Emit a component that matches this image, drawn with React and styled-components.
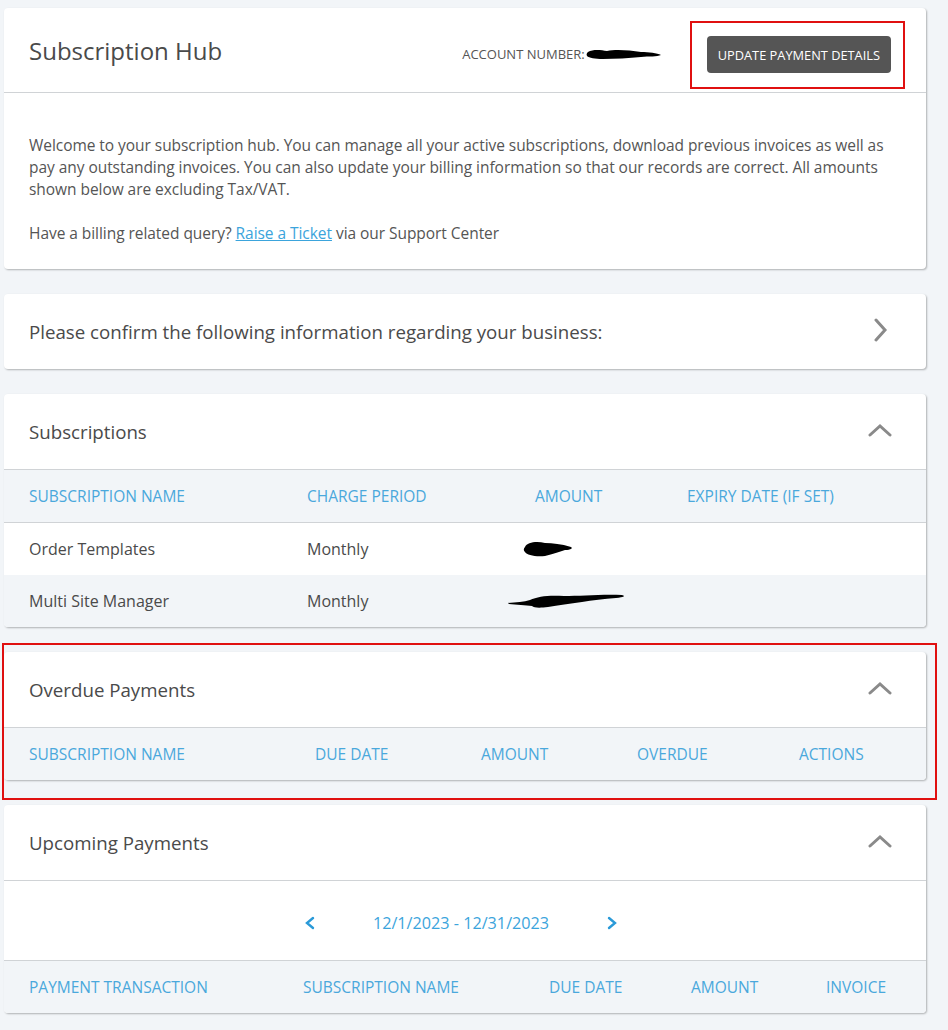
import React from "react";
import styled, { createGlobalStyle } from "styled-components";

const GlobalStyle = createGlobalStyle`
  html, body {
    margin: 0;
    background: #f2f5f8;
  }
  body {
    font-family: "Open Sans", "Liberation Sans", sans-serif;
    color: #4a4a4a;
  }
`;

const Page = styled.div`
  display: flex;
  flex-direction: column;
  gap: 25px;
  padding: 8px 22px 14px 4px;
`;

const Card = styled.section`
  background: #fff;
  border-radius: 4px;
  box-shadow: 1px 1px 2px rgba(0, 0, 0, 0.28);
  overflow: hidden;
`;

const HubHeader = styled.div`
  display: flex;
  align-items: center;
  height: 84px;
  padding: 0 21px 0 25px;
  border-bottom: 1px solid #d0d3d6;
`;

const Title = styled.h2`
  margin: 0;
  font-size: ${(p) => (p.$big ? "24px" : "18.7px")};
  font-weight: 400;
  color: #4a4a4a;
  flex: 1;
`;

const AccountLabel = styled.span`
  display: flex;
  align-items: center;
  margin-top: 8px;
  font-size: 13px;
  color: #555;
`;

const Highlight = styled.div`
  border: 2px solid #e01010;
  padding: ${(p) => p.$pad};
  margin: ${(p) => p.$margin};
`;

const DarkButton = styled.button`
  height: 37px;
  padding: 0 11px;
  border: 0;
  border-radius: 4px;
  background: #555;
  color: #fff;
  font-family: inherit;
  font-size: 12.8px;
  cursor: pointer;
`;

const HubBody = styled.div`
  padding: 41px 25px 25px;
  font-size: 15.5px;
  line-height: 22px;
  color: #555;
  letter-spacing: -0.05px;

  p {
    margin: 0 0 22px;
  }
  p:last-child {
    margin: 0;
  }
`;

const Link = styled.a`
  color: #3ba4dc;
  text-decoration: underline;
`;

const PanelHeader = styled.div`
  display: flex;
  align-items: center;
  height: 75px;
  padding: 0 34px 0 25px;
  border-bottom: ${(p) => (p.$open ? "1px solid #d0d3d6" : "0")};
`;

const Chevron = styled.svg`
  width: 24px;
  height: 24px;
  color: #8a8a8a;
  margin-top: ${(p) => p.$shift || 0}px;
`;

const TableGrid = styled.div`
  display: grid;
  grid-template-columns: ${(p) => p.$cols};
  align-items: center;
  height: 52px;
  padding-left: 25px;
  background: ${(p) => (p.$shade ? "#f2f5f8" : "#fff")};
  border-bottom: ${(p) => (p.$line ? "1px solid #d0d3d6" : "0")};
`;

const HeadCell = styled.span`
  font-size: 15.5px;
  color: #4aa8dc;
  text-transform: uppercase;
`;

const Cell = styled.span`
  font-size: 16px;
  color: #4a4a4a;
`;

const DateNav = styled.div`
  display: flex;
  align-items: center;
  justify-content: center;
  gap: 56px;
  height: 80px;
  padding: 4px 8px 0 0;
  box-sizing: border-box;
  border-bottom: 1px solid #d0d3d6;
`;

const NavArrow = styled.svg`
  width: 14px;
  height: 14px;
  color: #2a9ad8;
`;

const DateRange = styled.span`
  font-size: 16.2px;
  color: #3ba4dc;
`;

const Scribble = styled.svg`
  display: block;
  margin-left: ${(p) => p.$shift || 0}px;
`;

const ChevronUp = () => (
  <Chevron viewBox="0 0 24 24" $shift={-4}>
    <path d="M2 17 L12 8 L22 17" fill="none" stroke="currentColor" strokeWidth="3" strokeLinecap="round" />
  </Chevron>
);

const ChevronRight = () => (
  <Chevron viewBox="0 0 24 24" $shift={-4}>
    <path d="M8 2 L17 12 L8 22" fill="none" stroke="currentColor" strokeWidth="3" strokeLinecap="round" />
  </Chevron>
);

const subCols = "278px 228px 152px 1fr";
const dueCols = "286px 166px 156px 162px 1fr";
const upCols = "274px 246px 142px 135px 1fr";

export default function App() {
  return (
    <>
      <GlobalStyle />
      <Page>
        <Card>
          <HubHeader>
            <Title $big>Subscription Hub</Title>
            <AccountLabel>
              ACCOUNT NUMBER:
              <Scribble width="78" height="16" viewBox="0 0 78 16">
                <path d="M3 6 C8 3 16 4 22 5 C30 3 44 4 56 6 C64 6 72 7 76 9 C72 11 64 10 56 11 C44 12 30 13 18 13 C10 13 4 12 2 10 C1 8 2 7 3 6 Z" fill="#000" />
              </Scribble>
            </AccountLabel>
            <Highlight $pad="13px 12px 14px 15px" $margin="10px 0 0 27px">
              <DarkButton>UPDATE PAYMENT DETAILS</DarkButton>
            </Highlight>
          </HubHeader>
          <HubBody>
            <p>
              Welcome to your subscription hub. You can manage all your active subscriptions, download
              previous invoices as well as pay any outstanding invoices. You can also update your billing
              information so that our records are correct. All amounts shown below are excluding Tax/VAT.
            </p>
            <p>
              Have a billing related query? <Link href="#">Raise a Ticket</Link> via our Support Center
            </p>
          </HubBody>
        </Card>

        <Card>
          <PanelHeader>
            <Title>Please confirm the following information regarding your business:</Title>
            <ChevronRight />
          </PanelHeader>
        </Card>

        <Card>
          <PanelHeader $open>
            <Title>Subscriptions</Title>
            <ChevronUp />
          </PanelHeader>
          <TableGrid $cols={subCols} $shade $line>
            <HeadCell>Subscription Name</HeadCell>
            <HeadCell>Charge Period</HeadCell>
            <HeadCell>Amount</HeadCell>
            <HeadCell>Expiry Date (If Set)</HeadCell>
          </TableGrid>
          <TableGrid $cols={subCols}>
            <Cell>Order Templates</Cell>
            <Cell>Monthly</Cell>
            <Scribble width="56" height="20" viewBox="0 0 56 20" $shift={-14}>
              <path d="M4 8 C6 3 16 2 24 4 C32 4 40 5 50 8 C52 9 50 11 44 11 C38 13 32 15 24 17 C14 18 6 16 4 13 C2 11 3 9 4 8 Z" fill="#000" />
            </Scribble>
            <span />
          </TableGrid>
          <TableGrid $cols={subCols} $shade>
            <Cell>Multi Site Manager</Cell>
            <Cell>Monthly</Cell>
            <Scribble width="120" height="20" viewBox="0 0 120 20" $shift={-27}>
              <path d="M0 12 C8 11 16 11 22 9 C30 5 42 4 56 5 C72 5 95 3 114 4 C118 5 116 6 108 7 C96 8 84 9 74 11 C62 13 50 14 40 16 C32 17 26 17 24 15 C18 14 8 14 1 13 Z" fill="#000" />
            </Scribble>
            <span />
          </TableGrid>
        </Card>

        <Highlight $pad="7px 9px 18px 0" $margin="-9px -11px -20px -2px">
          <Card>
            <PanelHeader $open>
              <Title>Overdue Payments</Title>
              <ChevronUp />
            </PanelHeader>
            <TableGrid $cols={dueCols} $shade>
              <HeadCell>Subscription Name</HeadCell>
              <HeadCell>Due Date</HeadCell>
              <HeadCell>Amount</HeadCell>
              <HeadCell>Overdue</HeadCell>
              <HeadCell>Actions</HeadCell>
            </TableGrid>
          </Card>
        </Highlight>

        <Card>
          <PanelHeader $open>
            <Title>Upcoming Payments</Title>
            <ChevronUp />
          </PanelHeader>
          <DateNav>
            <NavArrow viewBox="0 0 14 14">
              <path d="M10 2 L4 7 L10 12" fill="none" stroke="currentColor" strokeWidth="2.4" strokeLinecap="round" />
            </NavArrow>
            <DateRange>12/1/2023 - 12/31/2023</DateRange>
            <NavArrow viewBox="0 0 14 14">
              <path d="M4 2 L10 7 L4 12" fill="none" stroke="currentColor" strokeWidth="2.4" strokeLinecap="round" />
            </NavArrow>
          </DateNav>
          <TableGrid $cols={upCols} $shade>
            <HeadCell>Payment Transaction</HeadCell>
            <HeadCell>Subscription Name</HeadCell>
            <HeadCell>Due Date</HeadCell>
            <HeadCell>Amount</HeadCell>
            <HeadCell>Invoice</HeadCell>
          </TableGrid>
        </Card>
      </Page>
    </>
  );
}
